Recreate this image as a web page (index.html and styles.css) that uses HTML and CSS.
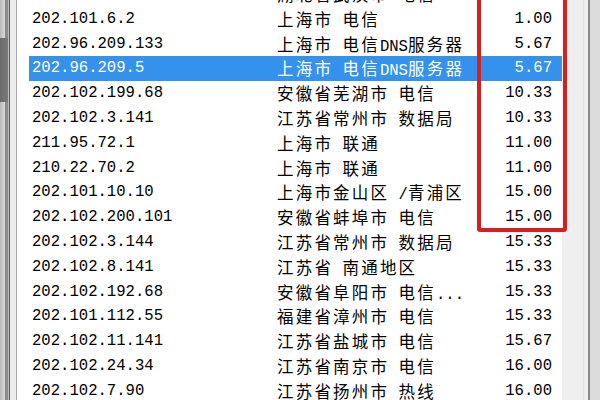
FILE: index.html
```html
<!DOCTYPE html>
<html>
<head>
<meta charset="utf-8">
<link rel="stylesheet" href="styles.css">
</head>
<body>
<div class="window">
  <div class="left-edge">
    <div class="outer">
      <div class="seg-top"><div class="e1"></div><div class="e2"></div></div>
      <div class="seg-dark"></div>
      <div class="seg-rest"><div class="e1"></div><div class="e2"></div></div>
    </div>
    <div class="e3"></div><div class="e4"></div><div class="e5"></div><div class="e6"></div>
  </div>
  <div class="list">
    <div class="rows">
      <div class="row"><span class="ip"></span><span class="loc">湖北省武汉市 电信</span><span class="num"></span></div>
      <div class="row"><span class="ip">202.101.6.2</span><span class="loc">上海市 电信</span><span class="num">1.00</span></div>
      <div class="row"><span class="ip">202.96.209.133</span><span class="loc">上海市 电信<span class="lat">DNS</span>服务器</span><span class="num">5.67</span></div>
      <div class="row sel"><span class="ip">202.96.209.5</span><span class="loc">上海市 电信<span class="lat">DNS</span>服务器</span><span class="num">5.67</span></div>
      <div class="row"><span class="ip">202.102.199.68</span><span class="loc">安徽省芜湖市 电信</span><span class="num">10.33</span></div>
      <div class="row"><span class="ip">202.102.3.141</span><span class="loc">江苏省常州市 数据局</span><span class="num">10.33</span></div>
      <div class="row"><span class="ip">211.95.72.1</span><span class="loc">上海市 联通</span><span class="num">11.00</span></div>
      <div class="row"><span class="ip">210.22.70.2</span><span class="loc">上海市 联通</span><span class="num">11.00</span></div>
      <div class="row"><span class="ip">202.101.10.10</span><span class="loc">上海市金山区 <span class="lat">/</span>青浦区</span><span class="num">15.00</span></div>
      <div class="row"><span class="ip">202.102.200.101</span><span class="loc">安徽省蚌埠市 电信</span><span class="num">15.00</span></div>
      <div class="row"><span class="ip">202.102.3.144</span><span class="loc">江苏省常州市 数据局</span><span class="num">15.33</span></div>
      <div class="row"><span class="ip">202.102.8.141</span><span class="loc">江苏省 南通地区</span><span class="num">15.33</span></div>
      <div class="row"><span class="ip">202.102.192.68</span><span class="loc">安徽省阜阳市 电信<span class="lat">...</span></span><span class="num">15.33</span></div>
      <div class="row"><span class="ip">202.101.112.55</span><span class="loc">福建省漳州市 电信</span><span class="num">15.33</span></div>
      <div class="row"><span class="ip">202.102.11.141</span><span class="loc">江苏省盐城市 电信</span><span class="num">15.67</span></div>
      <div class="row"><span class="ip">202.102.24.34</span><span class="loc">江苏省南京市 电信</span><span class="num">16.00</span></div>
      <div class="row"><span class="ip">202.102.7.90</span><span class="loc">江苏省扬州市 热线</span><span class="num">16.00</span></div>
    </div>
  </div>
  <div class="scroll"><div class="scroll-line"></div></div>
  <div class="right-border"></div>
  <div class="right-edge"></div>
  <div class="highlight-box"></div>
</div>
</body>
</html>
```

FILE: styles.css
```css
html, body {
  margin: 0;
  padding: 0;
  width: 600px;
  height: 400px;
  overflow: hidden;
  background: #fff;
}

.window {
  position: relative;
  display: flex;
  width: 600px;
  height: 400px;
  overflow: hidden;
}

.left-edge {
  display: flex;
  flex: 0 0 17px;
}
.left-edge .outer {
  display: flex;
  flex-direction: column;
  width: 8px;
}
.seg-top {
  display: flex;
  height: 38px;
}
.seg-dark {
  height: 64px;
  background: linear-gradient(to right, #6a6a6a, #7a7a7a);
}
.seg-rest {
  display: flex;
  flex: 1 1 auto;
}
.left-edge .e1 { width: 5px; background: linear-gradient(to right, #b8b8b8, #d8d8d8); }
.left-edge .e2 { width: 3px; background: #8a8a8a; }
.left-edge .e3 { width: 1px; background: #c0c0c0; }
.left-edge .e4 { width: 1px; background: #5a5a5a; }
.left-edge .e5 { width: 6px; background: #ededed; }
.left-edge .e6 { width: 1px; background: #a8a8a8; }

.list {
  flex: 0 0 545px;
  background: #fff;
  overflow: hidden;
}

.rows {
  margin-top: -18.4px;
  margin-left: 12px;
}

.row {
  display: flex;
  align-items: center;
  height: 24.8px;
  color: #000;
  font-family: "Liberation Mono", monospace;
  font-size: 15.6px;
  white-space: nowrap;
}

.row.sel {
  background: #3592ec;
  color: #fff;
}

.ip {
  flex: 0 0 245px;
  padding-left: 3px;
}

.loc {
  flex: 1 1 auto;
  font-family: "Noto Sans CJK SC", sans-serif;
  font-size: 16.5px;
  letter-spacing: 2.2px;
  word-spacing: 3.5px;
}

.lat {
  font-family: "Liberation Mono", monospace;
  font-size: 15.6px;
  letter-spacing: 0;
}

.num {
  flex: 0 0 80px;
  text-align: right;
  padding-right: 10px;
}

.scroll {
  flex: 0 0 26px;
  background: #efefef;
  position: relative;
}
.scroll-line {
  position: absolute;
  right: 4px;
  top: 0;
  bottom: 0;
  width: 1px;
  background: #e2e2e2;
}

.right-border {
  flex: 0 0 2px;
  background: #8c8c8c;
}

.right-edge {
  flex: 1 1 auto;
  background: #dcdcdc;
}

.highlight-box {
  position: absolute;
  left: 477px;
  top: -10px;
  width: 82px;
  height: 234px;
  border: 4px solid #d62020;
  border-radius: 3px;
}
```
